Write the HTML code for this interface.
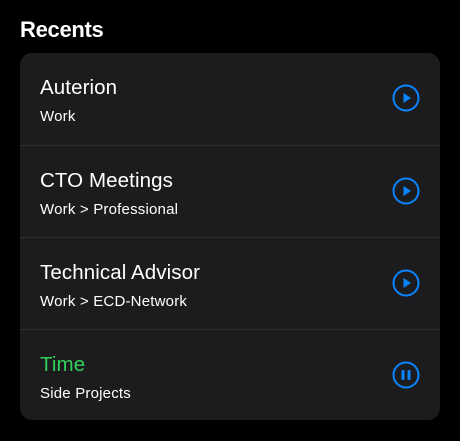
<!DOCTYPE html><html><head><style>
body{margin:0;background:#000;width:460px;height:441px;font-family:"Liberation Sans",sans-serif;color:#fff;position:relative;overflow:hidden}
h1{position:absolute;left:20px;top:17px;margin:0;font-size:22px;font-weight:bold;letter-spacing:-0.3px}
.card{position:absolute;left:20px;top:53px;width:420px;height:367px;background:#1c1c1e;border-radius:12px;overflow:hidden}
.row{position:absolute;left:0;width:420px;height:92px;border-top:1px solid #2e2e30;box-sizing:border-box}
.row:first-child{border-top:none}
.t{position:absolute;left:20px;top:23px;font-size:20.5px;letter-spacing:0.1px}
.s{position:absolute;left:20px;top:55px;font-size:15px;letter-spacing:0.2px}
svg{position:absolute;left:372px;top:31px}
</style></head><body>
<h1>Recents</h1>
<div class="card">
<div class="row" style="top:0"><div class="t">Auterion</div><div class="s">Work</div>
<svg width="28" height="28"><circle cx="14" cy="14" r="12.5" fill="none" stroke="#0a84ff" stroke-width="2"/><path d="M11.5 9 L19 14 L11.5 19Z" fill="#0a84ff"/></svg></div>
<div class="row" style="top:92px"><div class="t">CTO Meetings</div><div class="s">Work &gt; Professional</div>
<svg width="28" height="28"><circle cx="14" cy="14" r="12.5" fill="none" stroke="#0a84ff" stroke-width="2"/><path d="M11.5 9 L19 14 L11.5 19Z" fill="#0a84ff"/></svg></div>
<div class="row" style="top:184px"><div class="t">Technical Advisor</div><div class="s">Work &gt; ECD-Network</div>
<svg width="28" height="28"><circle cx="14" cy="14" r="12.5" fill="none" stroke="#0a84ff" stroke-width="2"/><path d="M11.5 9 L19 14 L11.5 19Z" fill="#0a84ff"/></svg></div>
<div class="row" style="top:276px"><div class="t" style="color:#30d158">Time</div><div class="s">Side Projects</div>
<svg width="28" height="28"><circle cx="14" cy="14" r="12.5" fill="none" stroke="#0a84ff" stroke-width="2"/><rect x="9.5" y="9" width="3" height="10" rx="1" fill="#0a84ff"/><rect x="15.5" y="9" width="3" height="10" rx="1" fill="#0a84ff"/></svg></div>
</div>
</body></html>
